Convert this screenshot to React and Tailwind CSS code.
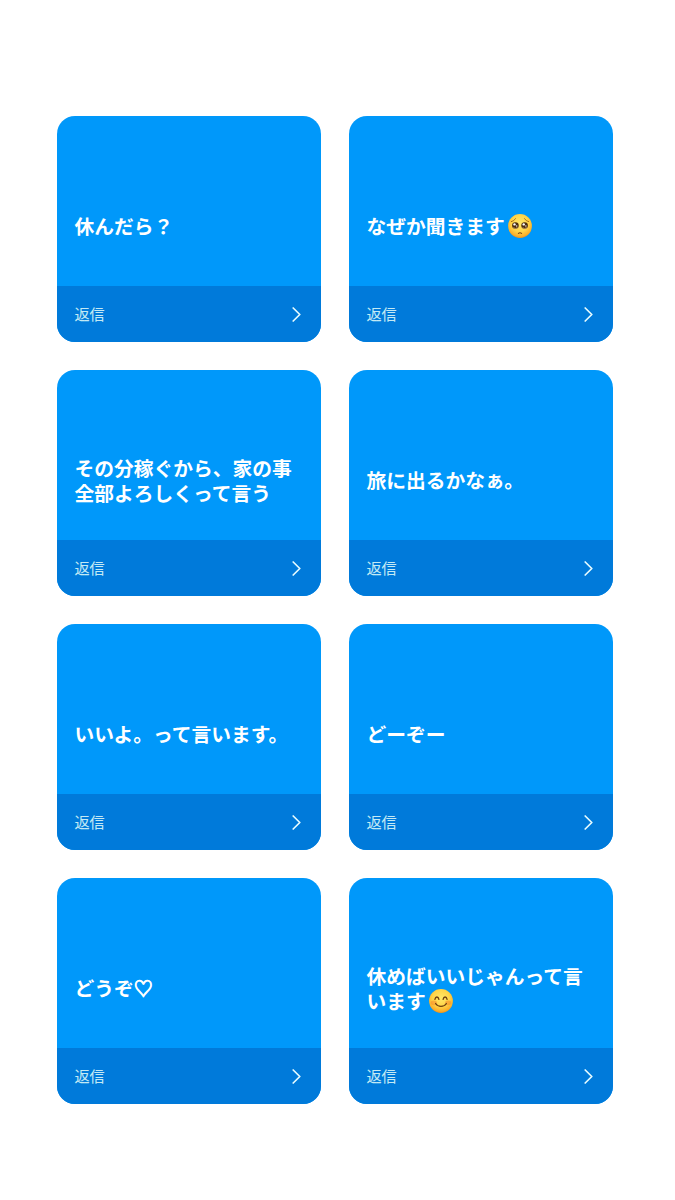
import { useId } from "react";

const replies = [
  { id: 1, lines: ["休んだら？"] },
  { id: 2, lines: ["なぜか聞きます"], emoji: "pleading" },
  { id: 3, lines: ["その分稼ぐから、家の事", "全部よろしくって言う"] },
  { id: 4, lines: ["旅に出るかなぁ。"] },
  { id: 5, lines: ["いいよ。って言います。"] },
  { id: 6, lines: ["どーぞー"] },
  { id: 7, lines: ["どうぞ"], heart: true },
  { id: 8, lines: ["休めばいいじゃんって言", "います"], emoji: "smile" },
];

// ── Emoji faces ────────────────────────────────────────────────────────────────
function Emoji({ type }) {
  const gradientId = useId();

  return (
    <svg viewBox="0 0 24 24" className="mt-px ml-[3.5px] h-6 w-6 shrink-0" aria-hidden="true">
      <defs>
        <radialGradient id={gradientId} cx="50%" cy="38%" r="64%">
          <stop offset="0" stopColor="#ffe768" />
          <stop offset="0.55" stopColor="#ffd548" />
          <stop offset="0.85" stopColor="#fbb02a" />
          <stop offset="1" stopColor="#e98a1a" />
        </radialGradient>
      </defs>
      <circle cx="12" cy="12" r="11.9" fill={`url(#${gradientId})`} />
      {type === "pleading" ? (
        <>
          {/* Brows */}
          <path
            d="M3.4 7.6C5 7.1 6.5 6.1 7.4 4.7M20.6 7.6C19 7.1 17.5 6.1 16.6 4.7"
            fill="none"
            stroke="#9a5a12"
            strokeWidth="0.9"
            strokeLinecap="round"
          />
          {/* Eyes */}
          <circle cx="7.4" cy="11.6" r="3.3" fill="#4b2c10" />
          <circle cx="16.6" cy="11.6" r="3.3" fill="#4b2c10" />
          <circle cx="6.5" cy="10.4" r="1.2" fill="#fff" />
          <circle cx="15.7" cy="10.4" r="1.2" fill="#fff" />
          <circle cx="8.7" cy="12" r="0.75" fill="#f5e9dc" />
          <circle cx="17.9" cy="12" r="0.75" fill="#f5e9dc" />
          <path
            d="M5.3 13.6Q7.4 15.4 9.5 13.6M14.5 13.6Q16.6 15.4 18.7 13.6"
            fill="none"
            stroke="#d9b27c"
            strokeWidth="0.7"
          />
          {/* Mouth */}
          <path
            d="M10.4 19.4Q12 18.2 13.6 19.4"
            fill="none"
            stroke="#7a4310"
            strokeWidth="1.1"
            strokeLinecap="round"
          />
        </>
      ) : (
        <>
          {/* Cheeks */}
          <ellipse cx="4.8" cy="13.8" rx="3.1" ry="2.4" fill="#f58a2c" opacity="0.55" />
          <ellipse cx="19.2" cy="13.8" rx="3.1" ry="2.4" fill="#f58a2c" opacity="0.55" />
          <path
            d="M5.9 10.3C6.5 7.2 9.3 7.2 9.9 10.3M14.1 10.3C14.7 7.2 17.5 7.2 18.1 10.3M6.6 14.5C9 18.3 15 18.3 17.4 14.5"
            fill="none"
            stroke="#70410f"
            strokeWidth="1.3"
            strokeLinecap="round"
          />
        </>
      )}
    </svg>
  );
}

// ── Reply card ─────────────────────────────────────────────────────────────────
function ReplyCard({ lines, emoji, heart }) {
  return (
    <article className="flex h-[226px] flex-col overflow-hidden rounded-[18px] bg-[#0098fa]">
      <div className="flex flex-1 items-center px-[17px] pt-[49px]">
        <div className="text-[19.75px] leading-[25px] font-bold text-white">
          {lines.map((line, i) => (
            <p key={line} className="flex h-[25px] items-center whitespace-nowrap">
              {line}
              {heart && (
                <span className="text-[19px] [-webkit-text-stroke:0.9px_white]">♡</span>
              )}
              {emoji && i === lines.length - 1 && <Emoji type={emoji} />}
            </p>
          ))}
        </div>
      </div>

      <button className="flex h-14 items-center justify-between bg-[#007ada] pr-5 pl-[17px]">
        <span className="pb-[3px] text-[15.2px] leading-5 font-normal text-[#c4eaf5]">返信</span>
        <svg viewBox="0 0 9 15" className="h-[15px] w-[9px]" aria-hidden="true">
          <path
            d="M1.2 1L7.8 7.5L1.2 14"
            fill="none"
            stroke="#e6fbff"
            strokeWidth="1.7"
            strokeLinecap="round"
            strokeLinejoin="round"
          />
        </svg>
      </button>
    </article>
  );
}

export default function App() {
  return (
    <main className="min-h-screen bg-white pt-[116.3px] pl-[57.4px] font-['Noto_Sans_CJK_JP',sans-serif]">
      <div className="grid w-[556px] grid-cols-2 gap-7">
        {replies.map((reply) => (
          <ReplyCard key={reply.id} lines={reply.lines} emoji={reply.emoji} heart={reply.heart} />
        ))}
      </div>
    </main>
  );
}
